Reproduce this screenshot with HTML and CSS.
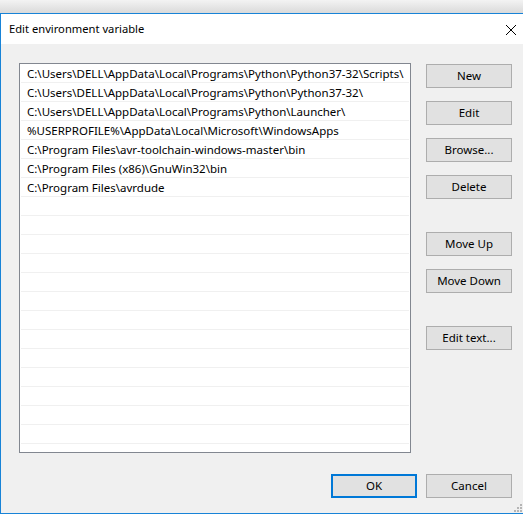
FILE: index.html
```html
<!DOCTYPE html>
<html>
<head>
<meta charset="utf-8">
<link rel="stylesheet" href="styles.css">
</head>
<body>
<div class="backdrop"></div>
<div class="window">
  <div class="titlebar">
    <span class="title">Edit environment variable</span>
    <svg class="close" width="12" height="12" viewBox="0 0 12 12"><path d="M1 1 L11 11 M11 1 L1 11" stroke="#000" stroke-width="1" fill="none"/></svg>
  </div>
  <div class="body">
    <div class="main">
      <div class="list">
        <div class="row">C:\Users\DELL\AppData\Local\Programs\Python\Python37-32\Scripts\</div>
        <div class="row">C:\Users\DELL\AppData\Local\Programs\Python\Python37-32\</div>
        <div class="row">C:\Users\DELL\AppData\Local\Programs\Python\Launcher\</div>
        <div class="row">%USERPROFILE%\AppData\Local\Microsoft\WindowsApps</div>
        <div class="row">C:\Program Files\avr-toolchain-windows-master\bin</div>
        <div class="row">C:\Program Files (x86)\GnuWin32\bin</div>
        <div class="row">C:\Program Files\avrdude</div>
        <div class="row"></div>
        <div class="row"></div>
        <div class="row"></div>
        <div class="row"></div>
        <div class="row"></div>
        <div class="row"></div>
        <div class="row"></div>
        <div class="row"></div>
        <div class="row"></div>
        <div class="row"></div>
        <div class="row"></div>
        <div class="row"></div>
        <div class="row"></div>
      </div>
      <div class="side">
        <div class="group">
          <button class="btn">New</button>
          <button class="btn">Edit</button>
          <button class="btn">Browse...</button>
          <button class="btn">Delete</button>
        </div>
        <div class="group">
          <button class="btn">Move Up</button>
          <button class="btn">Move Down</button>
        </div>
        <div class="group">
          <button class="btn">Edit text...</button>
        </div>
      </div>
    </div>
    <div class="footer">
      <button class="btn ok">OK</button>
      <button class="btn">Cancel</button>
    </div>
    <svg class="grip" width="8" height="8" viewBox="0 0 8 8">
      <rect x="6" y="0" width="2" height="2" fill="#b5b5b5"/>
      <rect x="3" y="3" width="2" height="2" fill="#b5b5b5"/>
      <rect x="6" y="3" width="2" height="2" fill="#b5b5b5"/>
      <rect x="0" y="6" width="2" height="2" fill="#b5b5b5"/>
      <rect x="3" y="6" width="2" height="2" fill="#b5b5b5"/>
      <rect x="6" y="6" width="2" height="2" fill="#b5b5b5"/>
    </svg>
  </div>
</div>
</body>
</html>
```

FILE: styles.css
```css
* { box-sizing: border-box; }
html, body {
  margin: 0;
  padding: 0;
  width: 523px;
  height: 514px;
  overflow: hidden;
  background: #f0f0f0;
  font-family: "Noto Sans", "Open Sans", sans-serif;
  font-size: 11.2px;
  color: #000;
}
.backdrop {
  height: 13px;
  background: linear-gradient(#f3f3f3, #dadada);
}
.window {
  height: 501px;
  border-top: 1px solid #1883d7;
  border-left: 1px solid #1883d7;
  border-bottom: 1px solid #1883d7;
  display: flex;
  flex-direction: column;
}
.titlebar {
  height: 30px;
  background: #fff;
  display: flex;
  align-items: center;
  justify-content: space-between;
  padding: 0 6px 0 8px;
  flex: none;
}
.title {
  font-size: 11.2px;
  line-height: 16px;
  padding-bottom: 1px;
}
.close {
  display: block;
  margin-top: 1px;
}
.body {
  flex: 1;
  position: relative;
  background: #f0f0f0;
  padding: 19px 0 0 18px;
  display: flex;
  flex-direction: column;
}
.main {
  display: flex;
  gap: 15px;
}
.list {
  width: 392px;
  height: 390px;
  border: 1px solid #828790;
  background: #fff;
  padding: 0 1px;
  overflow: hidden;
}
.row {
  height: 19px;
  border-bottom: 1px solid #f0f0f0;
  padding-left: 6px;
  line-height: 19px;
  font-size: 11.5px;
  white-space: nowrap;
  overflow: hidden;
}
.side {
  display: flex;
  flex-direction: column;
  padding-top: 1px;
}
.group {
  display: flex;
  flex-direction: column;
  gap: 13px;
  margin-bottom: 33px;
}
.btn {
  width: 86px;
  height: 24px;
  background: #e1e1e1;
  border: 1px solid #adadad;
  font-family: inherit;
  font-size: 11.5px;
  color: #000;
  padding: 0;
  margin: 0;
  line-height: 20px;
}
.footer {
  display: flex;
  justify-content: flex-end;
  gap: 9px;
  padding-right: 11px;
  margin-top: 21px;
}
.ok {
  border: 2px solid #0078d7;
}
.grip {
  position: absolute;
  right: 1px;
  bottom: 1px;
}
```
